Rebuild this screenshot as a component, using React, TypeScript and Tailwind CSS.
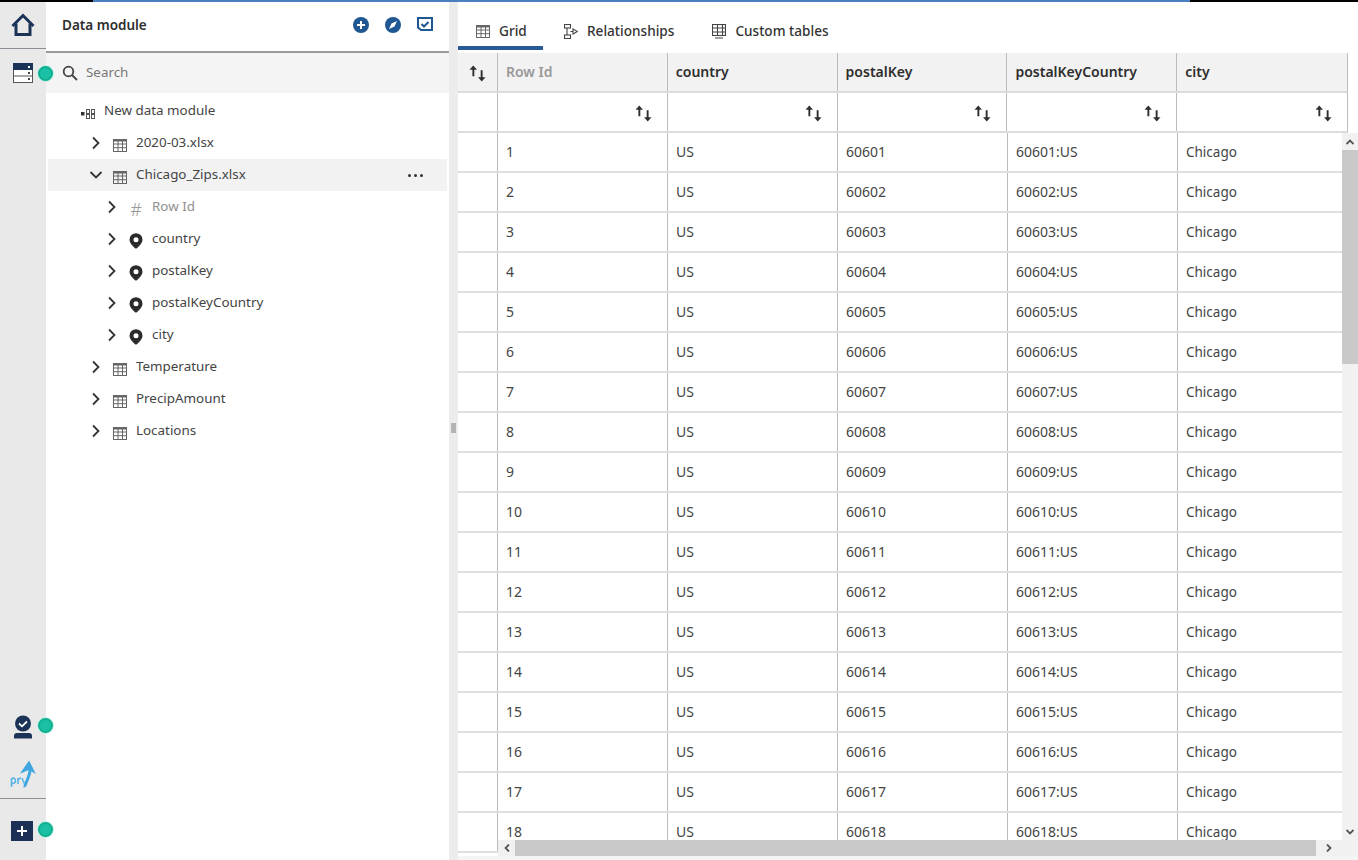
import React from "react";

const NAVY = "#1c3358";
const BLUE = "#1f5793";

const TableIcon = () => (
  <svg width="14" height="14" viewBox="0 0 14 14" fill="none" stroke="#666" strokeWidth="1">
    <rect x="0.500" y="1.500" width="13" height="12" />
    <path d="M0.500 6h13M0.500 9.700h13M5 3v10.500M9.500 3v10.500" />
    <path d="M0.500 2.500h13" strokeWidth="2" />
  </svg>
);

const Chevron = ({ down = false }: { down?: boolean }) => (
  <svg width="14" height="14" viewBox="0 0 14 14" fill="none" stroke="#333" strokeWidth="1.800">
    {down ? <path d="M1.500 4l5.500 5.500L12.500 4" /> : <path d="M4 1.500L9.500 7 4 12.500" />}
  </svg>
);

const Pin = () => (
  <svg width="14" height="16" viewBox="0 0 14 16">
    <path
      fillRule="evenodd"
      fill="#2b2b2b"
      d="M7 0.200a6.500 6.500 0 0 1 6.500 6.500c0 3.400-3.600 6.700-6.500 9.100C4.100 13.400 0.500 10.100 0.500 6.700A6.500 6.500 0 0 1 7 0.200zM7 4.200a2.500 2.500 0 1 0 0 5a2.500 2.500 0 0 0 0-5z"
    />
  </svg>
);

const Sort = () => (
  <svg width="17" height="17" viewBox="0 0 16 16" fill="#2f2f2f">
    <path d="M4 0.500L7.500 4.500H5V10.500H3.200V4.500H0.500z" />
    <path d="M12 15.500L8.500 11.500H11V5H12.800V11.500H15.500z" />
  </svg>
);

const Dot = ({ className }: { className: string }) => (
  <span className={`absolute left-[38px] w-[15px] h-[15px] rounded-full bg-[#1cc0a4] border-2 border-[#0fb091] ring-1 ring-[#c4f0e6] ${className}`} />
);

const Row = ({ indent, icon, label, chevron, muted, selected }: {
  indent: number; icon: React.ReactNode; label: string; chevron?: "r" | "d"; muted?: boolean; selected?: boolean;
}) => (
  <div className={`h-8 flex items-center ml-[2px] mr-[2px] ${selected ? "bg-[#f2f2f2]" : ""}`} style={{ paddingLeft: indent }}>
    <span className="w-[14px] flex justify-center">{chevron && <Chevron down={chevron === "d"} />}</span>
    <span className="w-[16px] ml-[9px] mt-[4px] flex justify-center">{icon}</span>
    <span className={`ml-2 mb-[2px] text-[13.4px] ${muted ? "text-[#909090]" : "text-[#444]"}`}>{label}</span>
    {selected && (
      <span className="ml-auto mr-[24px] flex gap-[3px]">
        <i className="w-[3px] h-[3px] rounded-full bg-[#333]" />
        <i className="w-[3px] h-[3px] rounded-full bg-[#333]" />
        <i className="w-[3px] h-[3px] rounded-full bg-[#333]" />
      </span>
    )}
  </div>
);

const cols = ["Row Id", "country", "postalKey", "postalKeyCountry", "city"];
const rows = Array.from({ length: 18 }, (_, i) => i + 1);

export default function App() {
  return (
    <div className="w-[1358px] h-[860px] overflow-hidden bg-white flex flex-col text-[14px]" style={{ fontFamily: '"Noto Sans", "Open Sans", sans-serif' }}>
      <div className="h-[2px] flex shrink-0">
        <div className="w-[93px] bg-black" />
        <div className="w-[1097px] bg-[#4a7fc0]" />
        <div className="flex-1 bg-black" />
      </div>
      <div className="flex-1 flex min-h-0">
        {/* rail */}
        <div className="relative w-[46px] bg-[#e9e9e9] flex flex-col shrink-0">
          <div className="h-[47px] border-b border-[#8a8f96] flex items-center justify-center pr-[1px]">
            <svg width="24" height="24" viewBox="0 0 24 24" fill="none" stroke={NAVY} strokeWidth="3">
              <path d="M1.500 13L12 2.500 22.500 13" />
              <path d="M5 10.500v11h14v-11" />
            </svg>
          </div>
          <div className="flex justify-center pt-[14px] pr-[1px]">
            <svg width="20" height="20" viewBox="0 0 20 20">
              <rect x="0.500" y="0.500" width="19" height="19" fill="#fff" stroke="#555" />
              <rect x="0" y="0" width="20" height="7" fill={NAVY} />
              <path d="M0 13h20" stroke="#555" />
              <rect x="15" y="3" width="2" height="2" fill="#fff" />
              <rect x="15" y="9" width="2" height="2" fill="#444" />
              <rect x="15" y="15" width="2" height="2" fill="#444" />
            </svg>
          </div>
          <Dot className="top-[64px]" />
          <div className="mt-auto flex flex-col items-center">
            <svg width="20" height="24" viewBox="0 0 20 24" className="mr-[1px]">
              <circle cx="10" cy="8.500" r="8" fill={NAVY} />
              <path d="M6 8.500l3 2.800 5-4.800" fill="none" stroke="#fff" strokeWidth="1.800" />
              <path d="M1 23.500v-2.500a3 3 0 0 1 3-3h12a3 3 0 0 1 3 3v2.500z" fill={NAVY} />
            </svg>
            <div className="h-[60px] w-full flex items-center justify-center border-b border-[#8a8f96] pt-[10px]">
              <svg width="26" height="30" viewBox="0 0 26 30" fill="none">
                <path d="M15 28c-1-2 5-10 5-17" stroke="#3ea6e0" strokeWidth="3" />
                <path d="M12 13l7-10 5 10-5-3z" fill="#3ea6e0" stroke="#3ea6e0" strokeWidth="1.500" />
                <path d="M1.500 28v-9M1.500 20c3-2 4 0 4 2s-2 3-4 2M8 25v-6M8 21c1-1.500 2-2 3-2M12 19l2.500 6" stroke="#5ab4e6" strokeWidth="1.600" />
              </svg>
            </div>
            <div className="h-[61px] w-full flex pt-[22px] justify-center pr-[2px]">
              <div className="w-[22px] h-[20px] bg-[#1c2f55] flex items-center justify-center">
                <svg width="12" height="12" viewBox="0 0 12 12" stroke="#fff" strokeWidth="2"><path d="M6 1v10M1 6h10" /></svg>
              </div>
            </div>
          </div>
          <Dot className="top-[716px]" />
          <Dot className="top-[820px]" />
        </div>

        {/* panel */}
        <div className="w-[403px] shrink-0 flex flex-col">
          <div className="h-[51px] border-b-2 border-[#9a9a9a] flex items-center pl-4 pb-[4px]">
            <span className="mt-[2px] font-semibold text-[#2e2e2e] text-[13.5px]">Data module</span>
            <div className="ml-auto flex items-center gap-[16px] mr-[16px]">
              <svg width="16" height="16" viewBox="0 0 16 16"><circle cx="8" cy="8" r="8" fill={BLUE} /><path d="M8 4v8M4 8h8" stroke="#fff" strokeWidth="2" /></svg>
              <svg width="16" height="16" viewBox="0 0 16 16"><circle cx="8" cy="8" r="8" fill={BLUE} /><path d="M12 4L9.500 9.500 4 12l2.500-5.500z" fill="#fff" /></svg>
              <svg width="16" height="16" viewBox="0 0 16 16" fill="none" stroke={BLUE} strokeWidth="2"><path d="M1 1h14v12H4l-3-2.500z" /><path d="M4.500 7l2.500 2.500 4.500-4.500" /></svg>
            </div>
          </div>
          <div className="h-[40px] bg-[#f4f4f4] flex items-center pl-4">
            <svg width="16" height="16" viewBox="0 0 16 16" fill="none" stroke="#444" strokeWidth="1.800"><circle cx="6.500" cy="6.500" r="4.800" /><path d="M10 10l5 5" /></svg>
            <span className="ml-2 mb-[2px] text-[#777] text-[13.4px]">Search</span>
          </div>
          <div className="pt-[2px]">
            <div className="h-8 flex items-center pl-[35px]">
              <svg width="14" height="10" viewBox="0 0 14 10" fill="none" stroke="#555" className="mt-[5px]">
                <rect x="0" y="3" width="3.500" height="3.500" fill="#333" stroke="none" />
                <rect x="5.500" y="0.500" width="3" height="4" /><rect x="10.500" y="0.500" width="3" height="4" />
                <rect x="5.500" y="5.500" width="3" height="4" /><rect x="10.500" y="5.500" width="3" height="4" />
              </svg>
              <span className="ml-[9px] mb-[2px] text-[#444] text-[13.4px]">New data module</span>
            </div>
            <Row indent={41} chevron="r" icon={<TableIcon />} label="2020-03.xlsx" />
            <Row indent={41} chevron="d" icon={<TableIcon />} label="Chicago_Zips.xlsx" selected />
            <Row indent={57} chevron="r" icon={<span className="text-[#999] text-[18px] leading-none font-light">#</span>} label="Row Id" muted />
            <Row indent={57} chevron="r" icon={<Pin />} label="country" />
            <Row indent={57} chevron="r" icon={<Pin />} label="postalKey" />
            <Row indent={57} chevron="r" icon={<Pin />} label="postalKeyCountry" />
            <Row indent={57} chevron="r" icon={<Pin />} label="city" />
            <Row indent={41} chevron="r" icon={<TableIcon />} label="Temperature" />
            <Row indent={41} chevron="r" icon={<TableIcon />} label="PrecipAmount" />
            <Row indent={41} chevron="r" icon={<TableIcon />} label="Locations" />
          </div>
        </div>

        {/* splitter */}
        <div className="w-[9px] shrink-0 bg-[#ececec] flex items-center justify-center pb-[6px]">
          <span className="w-[5px] h-[10px] bg-[#b4b4b4]" />
        </div>

        {/* main */}
        <div className="flex-1 min-w-0 flex flex-col relative">
          <div className="h-[51px] shrink-0 flex items-start text-[13.6px] font-medium text-[#333]">
            <div className="w-[85px] h-[48px] border-b-4 border-[#2a5a96] flex items-center pl-[18px] pt-[14px] gap-[9px]">
              <TableIcon />
              <span>Grid</span>
            </div>
            <div className="h-[48px] flex items-center pl-[21px] pt-[14px] pb-[4px] gap-[9px]">
              <svg width="14" height="15" viewBox="0 0 14 15" fill="none" stroke="#444" strokeWidth="1.100"><rect x="0.500" y="0.500" width="6" height="3.500" /><rect x="0.500" y="11" width="6" height="3.500" /><path d="M3 4v7M6.500 7.500h2.500" /><path d="M9 5l4.500 2.500L9 10z" /></svg>
              <span>Relationships</span>
            </div>
            <div className="h-[48px] flex items-center pl-[38px] pt-[14px] pb-[4px] gap-[9px]">
              <svg width="14" height="15" viewBox="0 0 14 15" fill="none" stroke="#444" strokeWidth="1.100"><rect x="0.500" y="0.500" width="13" height="11" /><path d="M0.500 4h13M0.500 8h13M5.500 0.500v11M10.500 0.500v11M3 14h8" /></svg>
              <span>Custom tables</span>
            </div>
          </div>

          <div className="flex-1 min-h-0 flex flex-col overflow-hidden">
            <div className="flex h-[40px] shrink-0 bg-[#f2f2f2] w-[890px] border-b-2 border-[#dcdcdc] border-r border-r-[#bbb]">
              <div className="w-[40px] border-r border-[#bbb] flex items-center justify-center pt-[2px]"><Sort /></div>
              {cols.map((c, i) => (
                <div key={c} className={`w-[170px] px-2 pb-[2px] flex items-center font-semibold ${i === 0 ? "text-[#999]" : "text-[#2e2e2e]"} ${i < 4 ? "border-r border-[#bbb]" : ""}`}>{c}</div>
              ))}
            </div>
            <div className="flex h-[40px] shrink-0 w-[890px] border-b-2 border-[#dcdcdc] border-r border-r-[#bbb]">
              <div className="w-[40px] border-r border-[#bbb]" />
              {cols.map((c, i) => (
                <div key={c} className={`w-[170px] pr-[15px] pt-[2px] flex items-center justify-end ${i < 4 ? "border-r border-[#bbb]" : ""}`}><Sort /></div>
              ))}
            </div>
            <div className="flex-1 min-h-0 flex overflow-hidden">
              <div className="w-[884px] shrink-0">
                {rows.map((n) => (
                  <div key={n} className="flex h-[40px] border-b-2 border-[#e0e0e0] text-[#444]">
                    <div className="w-[40px] shrink-0 border-r border-[#bbb]" />
                    <div className="w-[170px] shrink-0 px-2 pb-[1px] flex items-center border-r border-[#bbb]">{n}</div>
                    <div className="w-[170px] shrink-0 px-2 pb-[1px] flex items-center border-r border-[#bbb]">US</div>
                    <div className="w-[170px] shrink-0 px-2 pb-[1px] flex items-center border-r border-[#bbb]">{60600 + n}</div>
                    <div className="w-[170px] shrink-0 px-2 pb-[1px] flex items-center border-r border-[#bbb]">{60600 + n}:US</div>
                    <div className="flex-1 px-2 flex items-center text-[13.5px]">Chicago</div>
                  </div>
                ))}
              </div>
              <div className="w-[16px] shrink-0 bg-[#f1f1f1] flex flex-col h-[723px]">
                <div className="h-[17px] flex items-center justify-center">
                  <svg width="8" height="6" viewBox="0 0 8 6" fill="none" stroke="#555" strokeWidth="1.800"><path d="M0.500 5L4 1.500 7.500 5" /></svg>
                </div>
                <div className="h-[214px] bg-[#c9c9c9]" />
                <div className="mt-auto mb-[16px] h-[17px] flex items-center justify-center">
                  <svg width="8" height="6" viewBox="0 0 8 6" fill="none" stroke="#555" strokeWidth="1.800"><path d="M0.500 1L4 4.500 7.500 1" /></svg>
                </div>
              </div>
            </div>
          </div>

          {/* horizontal scrollbar overlays the bottom row */}
          <div className="absolute left-[40px] bottom-[4px] w-[844px] h-[16px] bg-[#f1f1f1] flex items-center">
            <div className="w-[17px] flex justify-center">
              <svg width="6" height="8" viewBox="0 0 6 8" fill="none" stroke="#555" strokeWidth="1.800"><path d="M5 0.500L1.500 4 5 7.500" /></svg>
            </div>
            <div className="w-[801px] h-full bg-[#c9c9c9]" />
            <div className="flex-1 flex justify-center">
              <svg width="6" height="8" viewBox="0 0 6 8" fill="none" stroke="#555" strokeWidth="1.800"><path d="M1 0.500L4.500 4 1 7.500" /></svg>
            </div>
          </div>
          <div className="absolute left-0 right-0 bottom-0 h-[4px] bg-[#f5f5f5]" />
        </div>
      </div>
    </div>
  );
}
